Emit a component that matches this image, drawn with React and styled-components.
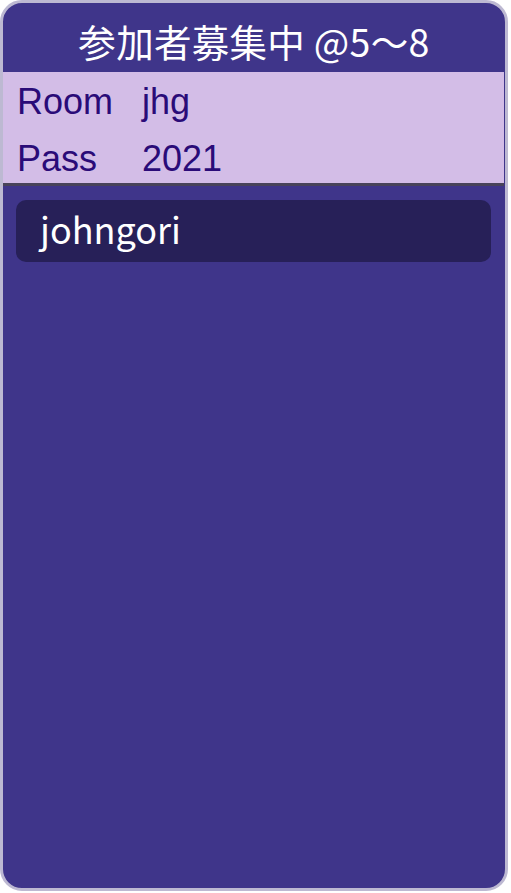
import React from 'react';
import styled, { createGlobalStyle } from 'styled-components';

const GlobalStyle = createGlobalStyle`
  html, body {
    margin: 0;
    padding: 0;
    background: #ffffff;
  }
  * {
    box-sizing: border-box;
  }
`;

const Card = styled.div`
  width: 508px;
  height: 891px;
  border: 3px solid #bdb9d2;
  border-radius: 22px;
  background-color: #3f358a;
  overflow: hidden;
  display: flex;
  flex-direction: column;
`;

const Header = styled.div`
  height: 69px;
  display: flex;
  align-items: center;
  justify-content: center;
  color: #ffffff;
  font-family: "Noto Sans CJK JP", "Noto Sans", sans-serif;
  font-size: 37.5px;
  letter-spacing: 0.3px;
  line-height: 1;
  padding-top: 6px;
`;

const InfoPanel = styled.div`
  height: 114px;
  background-color: #d3bde7;
  border-bottom: 3px solid #48435a;
  padding: 1px 0 0 14px;
  margin-right: 1px;
`;

const InfoRow = styled.div`
  display: grid;
  grid-template-columns: 125px 1fr;
  height: 57px;
  line-height: 57px;
  font-family: "Liberation Sans", Arial, sans-serif;
  font-size: 36px;
  color: #2a0b78;
`;

const List = styled.div`
  display: flex;
  flex-direction: column;
  gap: 10px;
  padding: 14px 14px 0 13px;
`;

const Player = styled.div`
  height: 62px;
  border-radius: 10px;
  background-color: #272058;
  color: #ffffff;
  font-family: "Noto Sans CJK JP", "Noto Sans", sans-serif;
  font-size: 36px;
  line-height: 56px;
  padding-left: 24px;
`;

const info = [
  { label: 'Room', value: 'jhg' },
  { label: 'Pass', value: '2021' },
];

const players = ['johngori'];

export default function App() {
  return (
    <>
      <GlobalStyle />
      <Card>
        <Header>参加者募集中 @5～8</Header>
        <InfoPanel>
          {info.map((row) => (
            <InfoRow key={row.label}>
              <span>{row.label}</span>
              <span>{row.value}</span>
            </InfoRow>
          ))}
        </InfoPanel>
        <List>
          {players.map((name) => (
            <Player key={name}>{name}</Player>
          ))}
        </List>
      </Card>
    </>
  );
}
